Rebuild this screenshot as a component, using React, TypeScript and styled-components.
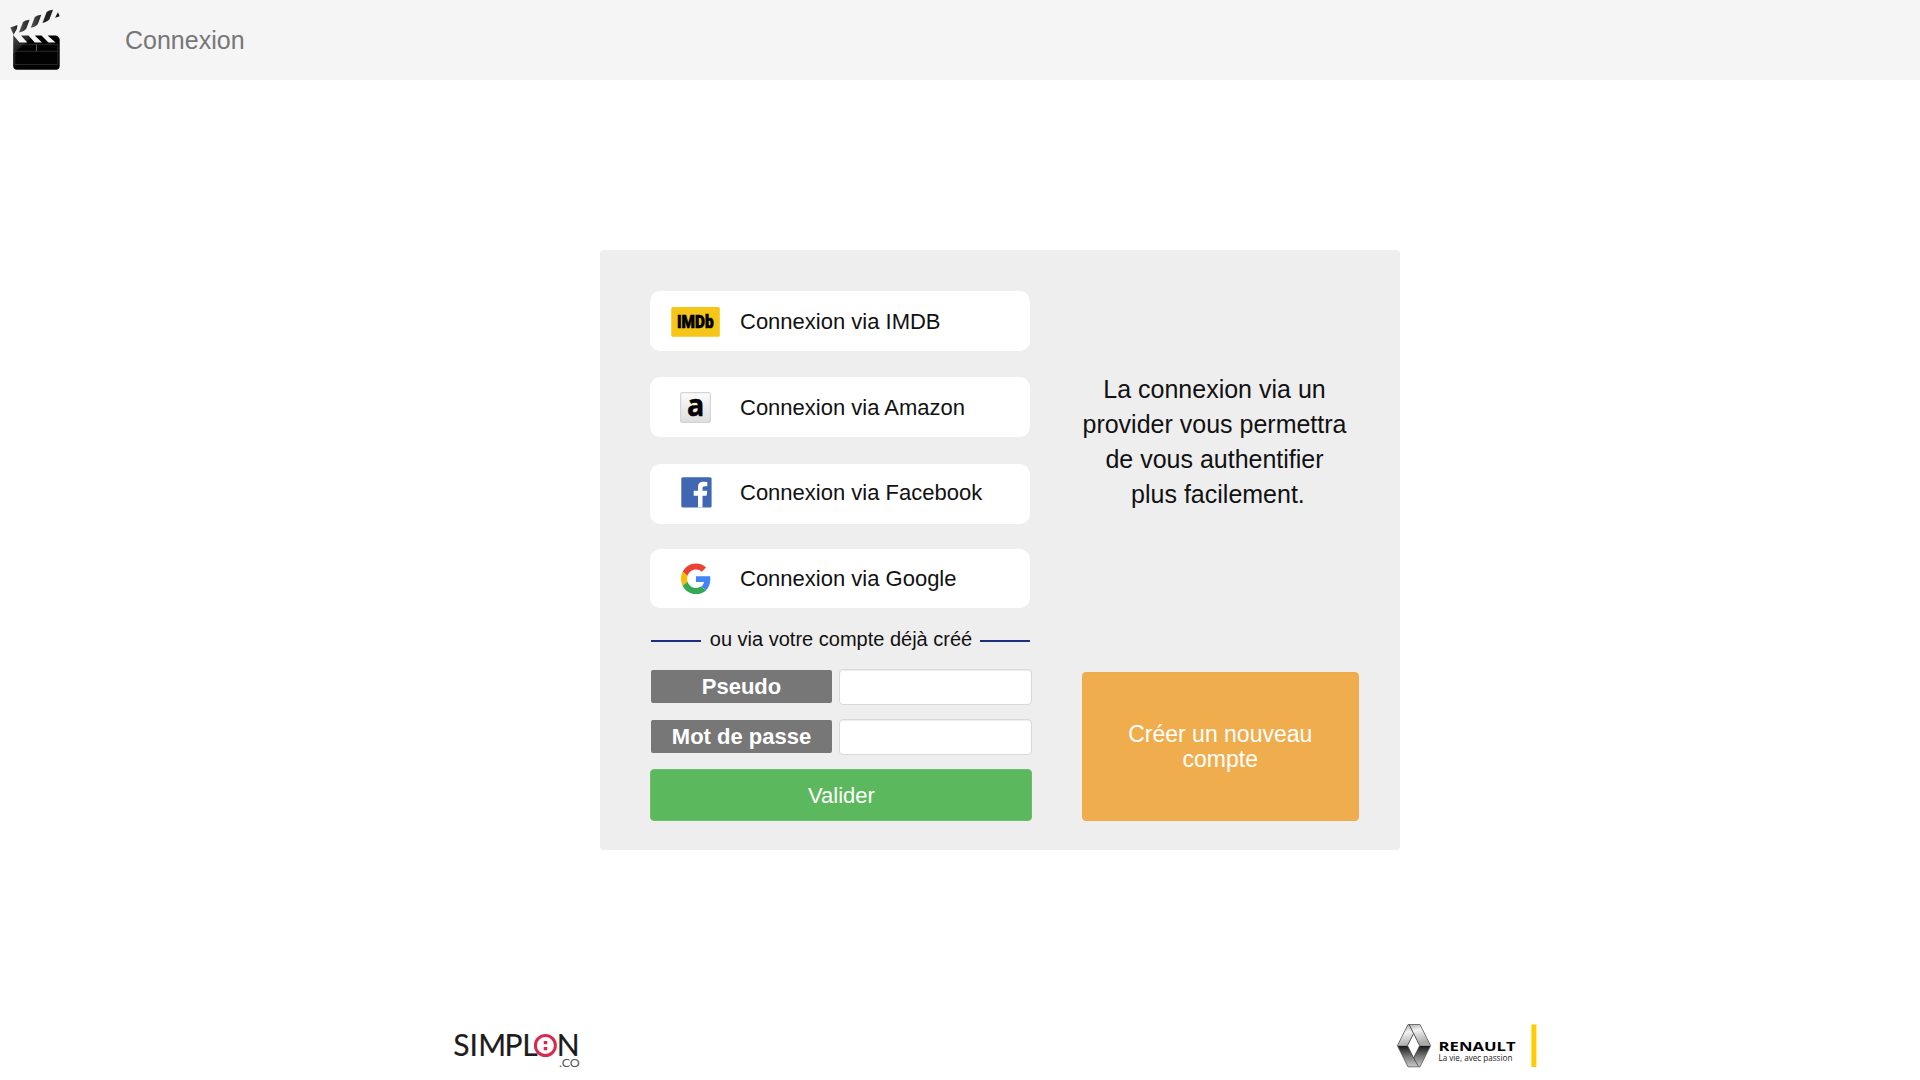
import React from 'react';
import styled, { createGlobalStyle } from 'styled-components';

const GlobalStyle = createGlobalStyle`
  *, *::before, *::after { box-sizing: border-box; }
  html, body { margin: 0; background: #fff; overflow: hidden; }
  body { font-family: "Liberation Sans", Arial, sans-serif; color: #111; }
`;

const Page = styled.div`
  height: 1080px;
  display: flex;
  flex-direction: column;
`;

const Navbar = styled.header`
  height: 80px;
  flex: none;
  display: flex;
  align-items: center;
  background: #f5f5f5;
`;

const Brand = styled.svg`
  width: 60px;
  height: 80px;
  display: block;
`;

const NavLink = styled.a`
  margin-left: 65px;
  font-size: 25px;
  line-height: 36px;
  color: #777;
`;

const Panel = styled.main`
  flex: none;
  width: 800px;
  height: 600px;
  margin: 170px 0 0 600px;
  padding: 41px 41px 29px 50px;
  display: flex;
  justify-content: space-between;
  background: #eee;
  border-radius: 4px;
`;

const LoginColumn = styled.section`
  width: 382px;
  display: flex;
  flex-direction: column;
`;

const Provider = styled.a<{ $gap: number; $top: number }>`
  width: 380px;
  height: 60px;
  margin-bottom: ${(p) => p.$gap}px;
  padding: ${(p) => p.$top}px 0 0 16px;
  display: flex;
  align-items: flex-start;
  gap: 14px;
  font-size: 22px;
  line-height: 40px;
  background: #fff;
  border-radius: 10px;
`;

const ProviderIcon = styled.svg`
  width: 60px;
  height: 40px;
  flex: none;
  overflow: visible;
`;

const Divider = styled.div`
  width: 380px;
  height: 61px;
  padding: 2px 0 0 1px;
  display: flex;
  align-items: center;
  justify-content: space-between;
  font-size: 20px;
`;

const DividerText = styled.span`
  padding-left: 1px;
`;

const Rule = styled.span`
  width: 50px;
  height: 2px;
  margin-top: 2px;
  background: #1c2f7c;
`;

const Field = styled.div`
  height: 36px;
  margin-bottom: 14px;
  padding-left: 1px;
  display: flex;
  align-items: center;
  justify-content: space-between;
`;

const Label = styled.label`
  width: 181px;
  height: 33px;
  margin-bottom: 1px;
  border-radius: 2px;
  background: #777;
  color: #fff;
  font-size: 22px;
  font-weight: 700;
  line-height: 33px;
  text-align: center;
`;

const Input = styled.input`
  width: 193.5px;
  height: 36px;
  border: 1px solid #d9d9d9;
  border-radius: 4px;
  background: #fff;
  box-shadow: inset 0 1px 1px rgba(0, 0, 0, 0.075);
  outline: none;
`;

const Submit = styled.button`
  height: 52px;
  padding: 1px 0 0 1px;
  border: 1px solid #6abf6a;
  border-radius: 4px;
  background: #5cb85c;
  color: #fff;
  font: 22px "Liberation Sans", Arial, sans-serif;
`;

const InfoColumn = styled.section`
  width: 277.5px;
  display: flex;
  flex-direction: column;
  justify-content: space-between;
`;

const Pitch = styled.p`
  width: 266px;
  margin: 81px 0 0;
  font-size: 25px;
  line-height: 35px;
  text-align: center;
`;

const Create = styled.button`
  height: 149px;
  padding: 0;
  border: 1px solid #f0ab49;
  border-radius: 4px;
  background: #f0ad4e;
  color: #fff;
  font: 23px/25px "Liberation Sans", Arial, sans-serif;
`;

const Footer = styled.footer`
  margin-top: 165px;
  padding: 0 370px 0 440px;
  display: flex;
  justify-content: space-between;
`;

const FooterLogo = styled.svg<{ $width: number }>`
  width: ${(p) => p.$width}px;
  height: 60px;
  display: block;
`;

const Clapper = () => (
  <Brand viewBox="0 0 60 80" aria-label="Accueil">
    <defs>
      <linearGradient id="stick" x1="0" x2="1">
        <stop offset="0" stopColor="#555" />
        <stop offset="1" stopColor="#222" />
      </linearGradient>
      <linearGradient id="board" x1="0" y1="0.1" x2="0.35" y2="0.4">
        <stop offset="0" stopColor="#444" />
        <stop offset="0.6" stopColor="#1c1c1c" />
        <stop offset="0.65" stopColor="#020202" />
      </linearGradient>
    </defs>
    <path d="M10.3 27.5 L17.5 25 L16.8 29 L13.6 34.8Z" fill="url(#stick)" />
    <path d="M23 22 Q25 20.3 29.6 19.8 L26.3 28.5 Q24.8 31.4 19 32.5Z" fill="url(#stick)" />
    <path d="M34.8 17 Q37 15 41.3 14.7 L38 23.7 Q36.5 26.5 30.8 27.7Z" fill="url(#stick)" />
    <path d="M46.6 12 Q48.5 10.2 53 9.8 L49.6 19 Q48 21.8 42.5 22.9Z" fill="#222" />
    <path d="M58 12.3 L59.6 16.2 L55 17.8Z" fill="#111" />
    <path d="M13.2 35 L19.5 42.5 H27.3 L21 35.5 H28.5 L34.8 42.5 H42 L34.7 35.5 H41.5 L48.5 42.5 H55.5 L47.6 35.5 H56 Q59.7 37 59.7 40 V66 Q59.7 69.7 56 69.7 H17 Q13.2 69.7 13.2 66Z" fill="url(#board)" />
    <path d="M14.8 44.4 H57.8 V64.6 H14.8Z M14.8 51.3 H57.8" fill="none" stroke="#333" strokeWidth="0.8" />
    <path d="M36.5 44.4 V51" stroke="#777" strokeWidth="0.8" />
  </Brand>
);

const ImdbIcon = () => (
  <ProviderIcon viewBox="0 0 60 40">
    <rect x="5.3" y="5" width="48.5" height="29.7" rx="1.5" fill="#f5c518" />
    <text x="11" y="26.3" fontFamily="Roboto, sans-serif" fontWeight="900" fontSize="18" textLength="36.5" lengthAdjust="spacingAndGlyphs" stroke="#000" strokeWidth="0.7">IMDb</text>
  </ProviderIcon>
);

const AmazonIcon = () => (
  <ProviderIcon viewBox="0 0 60 40">
    <defs>
      <linearGradient id="tile" x1="0" x2="0" y1="0" y2="1">
        <stop offset="0" stopColor="#fcfcfc" />
        <stop offset="1" stopColor="#dedede" />
      </linearGradient>
    </defs>
    <rect x="14.7" y="4.7" width="29.6" height="29.6" rx="1" fill="url(#tile)" stroke="#ccc" />
    <text x="21" y="27.7" fontFamily="Open Sans, sans-serif" fontWeight="700" fontSize="31" textLength="17.3" lengthAdjust="spacingAndGlyphs" stroke="#000" strokeWidth="0.5">a</text>
  </ProviderIcon>
);

const FacebookIcon = () => (
  <ProviderIcon viewBox="0 1 60 40">
    <rect x="15.3" y="5.2" width="30.3" height="30.3" rx="1.5" fill="#4267b2" />
    <path d="M32 35.5V23.7H27.7V18.7H32V15.3C32 11.5 34.1 9.8 37.5 9.8Q39.7 9.8 41.3 10.1V14.2H38.8C37 14.2 36.5 15 36.5 16.4V18.7H41.2L40.6 23.7H36.5V35.5Z" fill="#fff" />
  </ProviderIcon>
);

const GoogleIcon = () => (
  <ProviderIcon viewBox="0 0.6 60 40">
    <g transform="translate(15 5) scale(.625 .64)">
      <path fill="#EA4335" d="M24 9.5c3.54 0 6.71 1.22 9.21 3.6l6.85-6.85C35.9 2.38 30.47 0 24 0 14.62 0 6.51 5.38 2.56 13.22l7.98 6.19C12.43 13.72 17.74 9.5 24 9.5z" />
      <path fill="#4285F4" d="M46.98 24.55c0-1.57-.15-3.09-.38-4.55H24v9.02h12.94c-.58 2.96-2.26 5.48-4.78 7.18l7.73 6c4.51-4.18 7.09-10.36 7.09-17.65z" />
      <path fill="#FBBC05" d="M10.53 28.59c-.48-1.45-.76-2.99-.76-4.59s.27-3.14.76-4.59l-7.98-6.19C.92 16.46 0 20.12 0 24c0 3.88.92 7.54 2.56 10.78l7.97-6.19z" />
      <path fill="#34A853" d="M24 48c6.48 0 11.93-2.13 15.89-5.81l-7.73-6c-2.15 1.45-4.92 2.3-8.16 2.3-6.26 0-11.57-4.22-13.47-9.91l-7.98 6.19C6.51 42.62 14.62 48 24 48z" />
    </g>
  </ProviderIcon>
);

const SimplonLogo = () => (
  <FooterLogo $width={150} viewBox="440 1015 150 60">
    <g fontFamily="Lato, sans-serif" fontSize="30" fill="#1c1c1c" stroke="#1c1c1c" strokeWidth="0.2">
      <text y="1056.3" x="453.3 469.5 478.3 504.6 522.2 556.8">SIMPLN</text>
    </g>
    <circle cx="545.4" cy="1045.5" r="10" fill="#fff" stroke="#d9294f" strokeWidth="3" />
    <path d="M543.7 1041h3.6v3.2h-3.6z M543.7 1047h3.6v3.2h-3.6z" fill="#d9294f" />
    <text x="559" y="1066.6" fontFamily="Lato, sans-serif" fontSize="12" textLength="20.8" lengthAdjust="spacingAndGlyphs" fill="#555">.CO</text>
  </FooterLogo>
);

const RenaultLogo = () => (
  <FooterLogo $width={170} viewBox="1380 1015 170 60">
    <defs>
      <linearGradient id="upper" x1="0" x2="0.3" y1="0" y2="1">
        <stop offset="0" stopColor="#999" />
        <stop offset="0.4" stopColor="#f2f2f2" />
        <stop offset="1" stopColor="#aaa" />
      </linearGradient>
      <linearGradient id="lower" x1="0" x2="0" y1="0" y2="1">
        <stop offset="0" stopColor="#151515" />
        <stop offset="0.5" stopColor="#777" />
        <stop offset="1" stopColor="#ccc" />
      </linearGradient>
    </defs>
    <path d="M1408 1024.5H1420L1430.6 1045.7H1419.7L1413.6 1033.5L1407.5 1045.7H1397.4Z" fill="url(#upper)" />
    <path d="M1397.4 1045.7H1407.5L1413.6 1058L1419.7 1045.7H1430.6L1420 1066.8H1408Z" fill="url(#lower)" />
    <path d="M1408 1024.5H1420L1430.6 1045.7L1420 1066.8H1408L1397.4 1045.7Z" fill="none" stroke="#555" strokeWidth="0.8" />
    <path d="M1413.6 1033.5L1407.5 1045.7L1413.6 1058L1419.7 1045.7ZL1409 1024.5" fill="none" stroke="#444" strokeWidth="0.9" />
    <path d="M1413.6 1058L1418.5 1066.5" stroke="#444" strokeWidth="0.8" />
    <text x="1438.6" y="1050.6" fontFamily="Open Sans, sans-serif" fontWeight="700" fontSize="13.2" textLength="77" lengthAdjust="spacingAndGlyphs">RENAULT</text>
    <text x="1438.4" y="1061.2" fontFamily="Open Sans, sans-serif" fontSize="9" textLength="74" lengthAdjust="spacingAndGlyphs" fill="#222">La vie, avec passion</text>
    <rect x="1531.4" y="1024.5" width="5" height="42.5" fill="#fc0" />
  </FooterLogo>
);

const providers = [
  { name: 'IMDB', Icon: ImdbIcon, gap: 26, top: 11 },
  { name: 'Amazon', Icon: AmazonIcon, gap: 27, top: 11 },
  { name: 'Facebook', Icon: FacebookIcon, gap: 25, top: 9 },
  { name: 'Google', Icon: GoogleIcon, gap: 0, top: 10 },
];

export default function App() {
  return (
    <Page>
      <GlobalStyle />
      <Navbar>
        <Clapper />
        <NavLink>Connexion</NavLink>
      </Navbar>
      <Panel>
        <LoginColumn>
          {providers.map(({ name, Icon, gap, top }) => (
            <Provider key={name} $gap={gap} $top={top}>
              <Icon />
              Connexion via {name}
            </Provider>
          ))}
          <Divider>
            <Rule />
            <DividerText>ou via votre compte déjà créé</DividerText>
            <Rule />
          </Divider>
          <Field>
            <Label htmlFor="pseudo">Pseudo</Label>
            <Input id="pseudo" />
          </Field>
          <Field>
            <Label htmlFor="password">Mot de passe</Label>
            <Input id="password" type="password" />
          </Field>
          <Submit>Valider</Submit>
        </LoginColumn>
        <InfoColumn>
          <Pitch>
            La connexion via un
            <br />
            provider vous permettra
            <br />
            de vous authentifier
            <br />
            &nbsp;plus facilement.
          </Pitch>
          <Create>
            Créer un nouveau
            <br />
            compte
          </Create>
        </InfoColumn>
      </Panel>
      <Footer>
        <SimplonLogo />
        <RenaultLogo />
      </Footer>
    </Page>
  );
}
